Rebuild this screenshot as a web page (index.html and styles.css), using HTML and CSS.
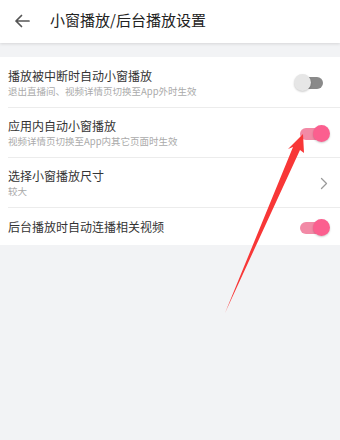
FILE: index.html
```html
<!DOCTYPE html>
<html lang="zh-CN">
<head>
<meta charset="utf-8">
<title>小窗播放/后台播放设置</title>
<link rel="stylesheet" href="styles.css">
</head>
<body>
<div class="page">
  <header class="topbar">
    <svg class="back" width="16" height="14" viewBox="0 0 16 14"><path d="M15 7H2M7.5 1.5L2 7l5.5 5.5" fill="none" stroke="#555" stroke-width="1.7" stroke-linecap="round" stroke-linejoin="round"/></svg>
    <h1 class="title">小窗播放/后台播放设置</h1>
  </header>
  <div class="gap"></div>
  <ul class="list">
    <li class="row">
      <div class="text">
        <div class="label">播放被中断时自动小窗播放</div>
        <div class="sub">退出直播间、视频详情页切换至App外时生效</div>
      </div>
      <span class="toggle"></span>
    </li>
    <li class="row">
      <div class="text">
        <div class="label">应用内自动小窗播放</div>
        <div class="sub">视频详情页切换至App内其它页面时生效</div>
      </div>
      <span class="toggle on"></span>
    </li>
    <li class="row">
      <div class="text">
        <div class="label">选择小窗播放尺寸</div>
        <div class="sub">较大</div>
      </div>
      <span class="chev"><svg width="8" height="13" viewBox="0 0 8 13"><path d="M1.5 1.5L6.5 6.5L1.5 11.5" fill="none" stroke="#9a9a9a" stroke-width="1.3" stroke-linecap="round" stroke-linejoin="round"/></svg></span>
    </li>
    <li class="row single">
      <div class="text">
        <div class="label">后台播放时自动连播相关视频</div>
      </div>
      <span class="toggle on"></span>
    </li>
  </ul>
  <svg class="pointer" width="340" height="440" viewBox="0 0 340 440"><polygon points="303,134 288,149 293,147 225,313 300,150 304,153" fill="#f83737"/></svg>
</div>
</body>
</html>
```

FILE: styles.css
```css
* { box-sizing: border-box; }
html, body { margin: 0; padding: 0; }
body {
  background: #f2f3f5;
  font-family: "Noto Sans CJK SC", "Noto Sans", "Liberation Sans", sans-serif;
}
.page {
  position: relative;
  width: 340px;
  height: 440px;
  overflow: hidden;
  background: #f2f3f5;
}
.topbar {
  height: 43px;
  background: #fff;
  display: flex;
  align-items: center;
  padding-left: 14px;
  box-shadow: 0 1px 3px rgba(0, 0, 0, 0.12);
  position: relative;
  z-index: 1;
}
.back { display: block; margin-top: -2px; }
.title {
  margin: 0 0 0 20px;
  font-size: 15px;
  font-weight: 400;
  color: #222;
  line-height: 20px;
  margin-top: -3px;
}
.gap { height: 14px; }
.list {
  list-style: none;
  margin: 0;
  padding: 0 0 0 8px;
  background: #fff;
}
.row {
  display: flex;
  align-items: center;
  justify-content: space-between;
  height: 50px;
  padding: 1px 10px 0 0;
  border-bottom: 1px solid #ececec;
}
.row:first-child { height: 51px; }
.row.single { height: 37px; border-bottom: none; }
.label {
  font-size: 12px;
  line-height: 16px;
  color: #333;
}
.sub {
  font-size: 9.5px;
  line-height: 13px;
  color: #aaa;
  margin-top: 1px;
}
.toggle {
  position: relative;
  width: 36px;
  height: 17px;
  flex: none;
}
.toggle::before {
  content: "";
  position: absolute;
  left: 7px;
  top: 3px;
  width: 22px;
  height: 12px;
  border-radius: 6px;
  background: #8a8a8a;
}
.toggle::after {
  content: "";
  position: absolute;
  left: 0;
  top: 0;
  width: 17px;
  height: 17px;
  border-radius: 50%;
  background: #e6e6e6;
  box-shadow: 0 1px 2px rgba(0, 0, 0, 0.2);
}
.toggle.on::before { background: #f28aa6; left: 6px; }
.toggle.on::after { left: 19px; background: #fb5f8f; }
.chev {
  width: 36px;
  display: flex;
  justify-content: flex-end;
  padding-right: 2px;
  flex: none;
}
.chev svg { display: block; }
.pointer {
  position: absolute;
  left: 0;
  top: 0;
  pointer-events: none;
  z-index: 2;
}
```
